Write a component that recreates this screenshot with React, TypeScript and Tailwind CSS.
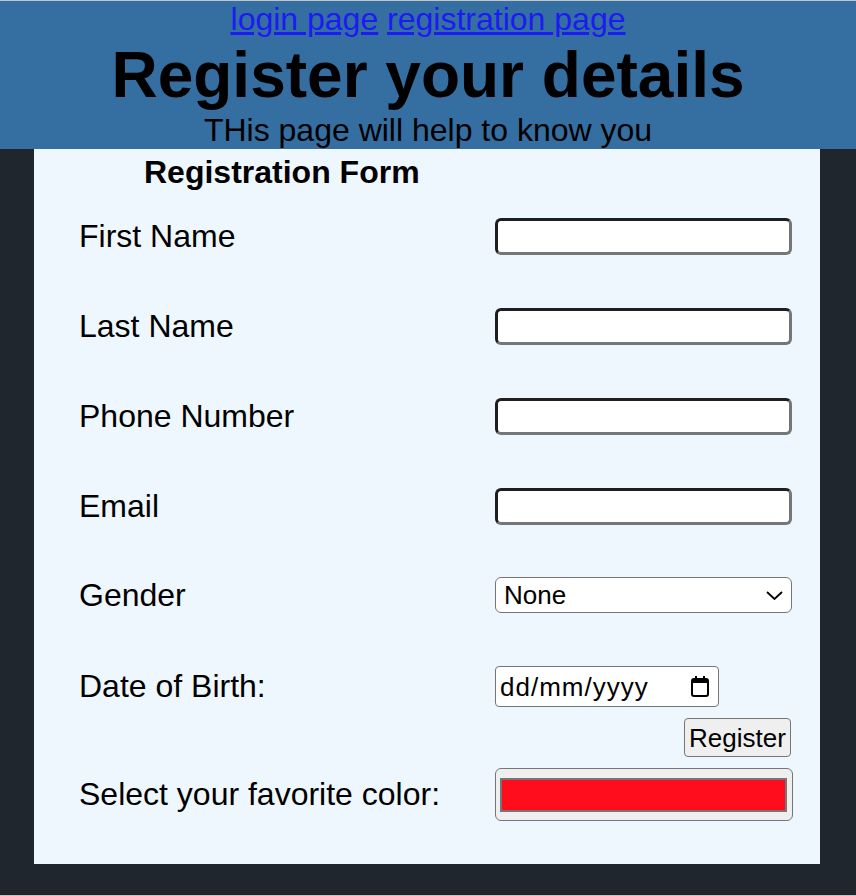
export default function App() {
  const labelCls = "w-[416px] text-[32px] leading-[37px]";
  const rows = ["First Name", "Last Name", "Phone Number", "Email"];
  return (
    <div className="min-h-[896px] bg-[#1f262e] font-['Liberation_Sans',Arial,sans-serif] text-black flex flex-col">
      <div className="h-px bg-[#c4c4c4]" />
      <header className="bg-[#356ea1] text-center">
        <div className="text-[32px] leading-[37px]">
          <a className="text-[#1b1bf3] underline" href="#">
            login page
          </a>{" "}
          <a className="text-[#1b1bf3] underline" href="#">
            registration page
          </a>
        </div>
        <h1 className="text-[64px] font-bold leading-[74px]">Register your details</h1>
        <p className="text-[32px] leading-[37px]">THis page will help to know you</p>
      </header>
      <main className="ml-[34px] w-[786px] bg-[#eff7fe] pt-[5px] pb-[43px]">
        <div className="pl-[110px] text-[32px] font-bold leading-[37px]">Registration Form</div>
        {rows.map((r) => (
          <div key={r} className="flex h-[90px] items-center pl-[45px]">
            <div className={labelCls}>{r}</div>
            <div className="h-[37px] w-[297px] rounded-[6px] border-[3px] border-t-[#1e1e1e] border-l-[#1e1e1e] border-r-[#767676] border-b-[#767676] bg-white" />
          </div>
        ))}
        <div className="flex h-[88px] items-center pl-[45px]">
          <div className={labelCls}>Gender</div>
          <div className="flex h-[36px] w-[297px] items-center justify-between rounded-[6px] border-[1.5px] border-[#767676] bg-white pl-[8px] pr-[8px]">
            <span className="text-[26px] leading-[30px]">None</span>
            <svg width="17" height="9" viewBox="0 0 17 9" fill="none">
              <polyline points="1,1 8.5,8 16,1" stroke="#000" strokeWidth="1.8" />
            </svg>
          </div>
        </div>
        <div className="flex h-[41px] mt-[27px] items-center pl-[45px]">
          <div className={labelCls}>Date of Birth:</div>
          <div className="flex h-[41px] w-[224px] items-center justify-between rounded-[4px] border-[1.5px] border-[#767676] bg-white pl-[4px] pr-[9px]">
            <span className="text-[26px] leading-[30px] tracking-[1px]">dd/mm/yyyy</span>
            <svg width="18" height="21" viewBox="0 0 18 21" fill="none">
              <rect x="4" y="0" width="2" height="4" fill="#000" />
              <rect x="12" y="0" width="2" height="4" fill="#000" />
              <rect x="1" y="3" width="16" height="17" rx="2" stroke="#000" strokeWidth="2" />
              <rect x="1" y="3" width="16" height="4" fill="#000" />
            </svg>
          </div>
        </div>
        <div className="mt-[11px] flex h-[39px] pl-[650px]">
          <button className="h-[39px] w-[107px] rounded-[4px] border-[1.5px] border-[#767676] bg-[#efefef] text-[26px] leading-[30px]">
            Register
          </button>
        </div>
        <div className="mt-[11px] flex h-[53px] items-center pl-[45px]">
          <div className={labelCls}>Select your favorite color:</div>
          <div className="flex h-[53px] w-[298px] items-center rounded-[6px] border-[1.5px] border-[#767676] bg-[#efefef] pl-[4px] pr-[5px]">
            <div className="h-[34px] w-full border-2 border-[#767676] bg-[#ff0d1d]" />
          </div>
        </div>
      </main>
      <div className="flex-1" />
      <div className="h-px bg-[#c4c4c4]" />
    </div>
  );
}
